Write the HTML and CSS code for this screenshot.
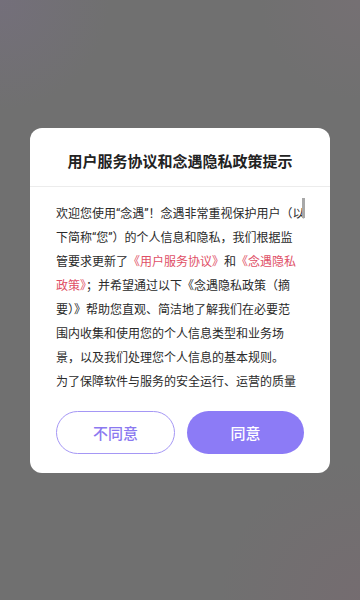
FILE: index.html
```html
<!DOCTYPE html>
<html lang="zh-CN">
<head>
<meta charset="utf-8">
<meta name="viewport" content="width=device-width, initial-scale=1">
<title>用户服务协议和念遇隐私政策提示</title>
<link rel="stylesheet" href="styles.css">
</head>
<body>
<div class="screen">
  <div class="dialog">
    <div class="title">用户服务协议和念遇隐私政策提示</div>
    <div class="content">
      <p class="para">欢迎您使用“念遇”！念遇非常重视保护用户（以<br>下简称“您”）的个人信息和隐私，我们根据监<br>管要求更新了<span class="link">《用户服务协议》</span>和<span class="link">《念遇隐私<br>政策》</span>；并希望通过以下《念遇隐私政策（摘<br>要）》帮助您直观、简洁地了解我们在必要范<br>围内收集和使用您的个人信息类型和业务场<br>景，以及我们处理您个人信息的基本规则。</p>
      <p class="para">为了保障软件与服务的安全运行、运营的质量</p>
      <div class="thumb"></div>
    </div>
    <div class="actions">
      <button class="btn btn-ghost">不同意</button>
      <button class="btn btn-primary">同意</button>
    </div>
  </div>
</div>
</body>
</html>
```
FILE: styles.css
```css
html, body {
  margin: 0;
  padding: 0;
  height: 100%;
}
body {
  font-family: Roboto, "Noto Sans CJK SC", sans-serif;
  background: #707070;
}
.screen {
  width: 360px;
  height: 600px;
  display: flex;
  align-items: center;
  justify-content: center;
  background:
    radial-gradient(circle at 0 0, rgba(120, 110, 135, 0.45), rgba(112, 112, 112, 0) 110px),
    radial-gradient(circle at 100% 0, rgba(125, 112, 120, 0.4), rgba(112, 112, 112, 0) 100px),
    radial-gradient(circle at 100% 100%, rgba(122, 104, 112, 0.45), rgba(112, 112, 112, 0) 140px),
    #707070;
}
.dialog {
  width: 300px;
  background: #fff;
  border-radius: 12px;
  overflow: hidden;
}
.title {
  padding: 22px 0 12px;
  line-height: 24px;
  font-size: 15px;
  font-weight: 700;
  color: #222;
  text-align: center;
  border-bottom: 1px solid #ececec;
}
.content {
  position: relative;
  box-sizing: border-box;
  height: 209px;
  padding: 15px 26px 0;
  overflow: hidden;
}
.para {
  margin: 0;
  font-size: 12px;
  line-height: 24px;
  color: #2a2a2a;
  white-space: nowrap;
}
.link {
  color: #e04f66;
}
.thumb {
  position: absolute;
  left: 272px;
  top: 11px;
  width: 3px;
  height: 20px;
  background: #a8a8a8;
}
.actions {
  display: flex;
  gap: 12px;
  padding: 15px 26px 19px;
}
.btn {
  flex: 1;
  height: 43px;
  border-radius: 22px;
  font-family: "Noto Sans CJK SC", sans-serif;
  font-size: 15px;
  font-weight: 500;
  cursor: pointer;
}
.btn-ghost {
  background: #fff;
  border: 1px solid #a597f5;
  color: #8b79f0;
}
.btn-primary {
  background: #8c7bf6;
  border: none;
  color: #fff;
}
```
